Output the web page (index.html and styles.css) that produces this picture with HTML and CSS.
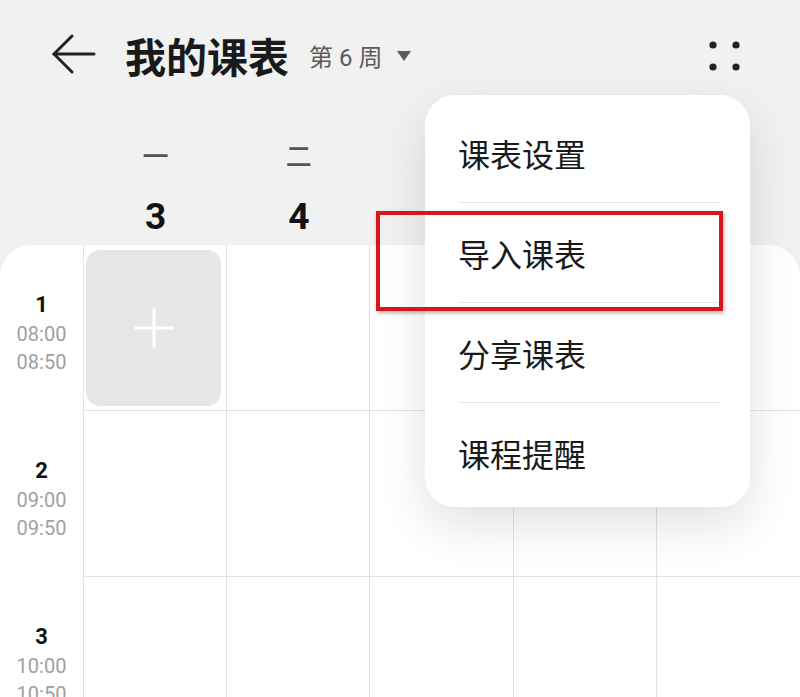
FILE: index.html
```html
<!doctype html>
<html lang="zh-CN">
<head>
    <meta charset="UTF-8">
    <meta name="viewport" content="width=device-width, initial-scale=1.0">
    <title>我的课表</title>
    <link rel="stylesheet" href="styles.css">
</head>
<body>
    <header class="topbar">
        <svg class="back" width="44" height="44" viewBox="0 0 44 44" fill="none" stroke="#222" stroke-width="3" stroke-linecap="round" stroke-linejoin="round">
            <path d="M2 20 H42"/>
            <path d="M20 2 L2 20 L20 38"/>
        </svg>
        <h1>我的课表</h1>
        <span class="week">第 6 周</span>
        <span class="caret"></span>
        <svg class="more" width="40" height="40" viewBox="0 0 40 40" fill="#222">
            <circle cx="8" cy="9" r="3.6"/>
            <circle cx="31" cy="9" r="3.6"/>
            <circle cx="8" cy="31" r="3.6"/>
            <circle cx="31" cy="31" r="3.6"/>
        </svg>
    </header>

    <div class="days">
        <div></div>
        <div class="day"><span class="weekday">一</span><span class="date">3</span></div>
        <div class="day"><span class="weekday">二</span><span class="date">4</span></div>
        <div class="day"><span class="weekday">三</span><span class="date">5</span></div>
        <div class="day"><span class="weekday">四</span><span class="date">6</span></div>
        <div class="day"><span class="weekday">五</span><span class="date">7</span></div>
    </div>

    <main class="timetable">
        <div class="time"><strong>1</strong><span>08:00</span><span>08:50</span></div>
        <div class="slot"><button class="add" aria-label="添加课程"></button></div>
        <div class="slot"></div>
        <div class="slot"></div>
        <div class="slot"></div>
        <div class="slot"></div>

        <div class="time"><strong>2</strong><span>09:00</span><span>09:50</span></div>
        <div class="slot"></div>
        <div class="slot"></div>
        <div class="slot"></div>
        <div class="slot"></div>
        <div class="slot"></div>

        <div class="time"><strong>3</strong><span>10:00</span><span>10:50</span></div>
        <div class="slot"></div>
        <div class="slot"></div>
        <div class="slot"></div>
        <div class="slot"></div>
        <div class="slot"></div>
    </main>

    <ul class="menu">
        <li>课表设置</li>
        <li class="marked">导入课表</li>
        <li>分享课表</li>
        <li>课程提醒</li>
    </ul>
</body>
</html>
```

FILE: styles.css
```css
body {
    font-family: Roboto, "Noto Sans CJK SC", sans-serif;
    margin: 0;
    padding: 0;
    background-color: #f1f1f1;
    color: #1a1a1a;
    height: 697px;
    overflow: hidden;
    position: relative;
}

.topbar {
    display: flex;
    align-items: center;
    height: 110px;
    padding-left: 52px;
    padding-right: 55px;
}

.topbar .back {
    margin-top: 2px;
}

.topbar h1 {
    font-family: "Noto Sans CJK SC", sans-serif;
    font-size: 41px;
    font-weight: 700;
    margin: 0 0 0 29px;
    line-height: 1;
}

.week {
    font-family: Roboto, "Noto Sans CJK SC", sans-serif;
    font-size: 24px;
    color: #5a5a5a;
    margin-left: 20px;
    white-space: pre;
}

.caret {
    width: 0;
    height: 0;
    border-left: 7px solid transparent;
    border-right: 7px solid transparent;
    border-top: 10px solid #5a5a5a;
    margin-left: 15px;
    margin-top: 2px;
}

.topbar .more {
    margin-left: auto;
    margin-top: 2px;
}

.days {
    display: grid;
    grid-template-columns: 84px repeat(5, 1fr);
    height: 135px;
}

.day {
    display: flex;
    flex-direction: column;
    align-items: center;
    padding-top: 27px;
    gap: 22px;
}

.weekday {
    font-family: "Noto Sans CJK SC", sans-serif;
    font-size: 26px;
    font-weight: 500;
    color: #555;
    line-height: 36px;
}

.date {
    font-size: 37px;
    font-weight: 700;
    color: #111;
    line-height: 44px;
}

.timetable {
    display: grid;
    grid-template-columns: 84px repeat(5, 1fr);
    grid-auto-rows: 166px;
    background-color: #fff;
    border-radius: 32px 32px 0 0;
}

.time {
    display: flex;
    flex-direction: column;
    align-items: center;
    justify-content: center;
    padding-top: 10px;
    border-right: 1px solid #e3e3e3;
}

.time strong {
    font-size: 22px;
    font-weight: 700;
    color: #111;
    line-height: 30px;
}

.time span {
    font-size: 20px;
    color: #a0a0a0;
    line-height: 28px;
}

.slot {
    border-right: 1px solid #e2e2e2;
    border-bottom: 1px solid #e2e2e2;
    display: flex;
}

.slot:nth-child(6n) {
    border-right: none;
}

.add {
    flex-grow: 1;
    margin: 5px 5px 4px 2px;
    border: none;
    border-radius: 14px;
    background-color: #e6e6e6;
    position: relative;
    cursor: pointer;
}

.add::before,
.add::after {
    content: "";
    position: absolute;
    left: 50%;
    top: 50%;
    background-color: #fff;
    transform: translate(-50%, -50%);
}

.add::before {
    width: 39px;
    height: 3px;
}

.add::after {
    width: 3px;
    height: 39px;
}

.menu {
    position: absolute;
    top: 95px;
    left: 425px;
    width: 325px;
    box-sizing: border-box;
    margin: 0;
    padding: 8px 30px 5px 33px;
    list-style: none;
    background-color: #fff;
    border-radius: 30px;
    box-shadow: 0 18px 50px rgba(0, 0, 0, 0.12);
}

.menu li {
    height: 99px;
    display: flex;
    align-items: center;
    font-family: "Noto Sans CJK SC", sans-serif;
    font-size: 32px;
    color: #1a1a1a;
    border-bottom: 1px solid #e6e6e6;
    position: relative;
}

.menu li:last-child {
    border-bottom: none;
}

/* red annotation box around the highlighted item */
.menu li.marked::after {
    content: "";
    position: absolute;
    left: -82px;
    top: 8px;
    width: 347px;
    height: 100px;
    box-sizing: border-box;
    border: 4px solid #d9161c;
    box-shadow: 1px 2px 4px rgba(0, 0, 0, 0.3);
}
```
